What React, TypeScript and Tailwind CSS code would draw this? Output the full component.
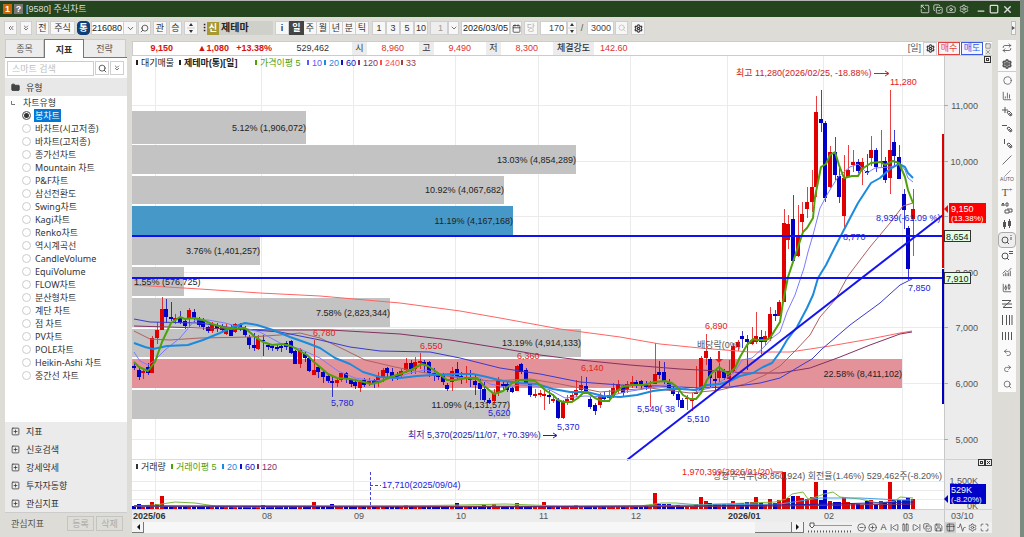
import type { ReactNode } from "react";
import { twMerge } from "tailwind-merge";
import {
  Activity,
  Calendar,
  Camera,
  ChartCandlestick,
  ChartColumn,
  ChartNoAxesCombined,
  ChevronDown,
  ChevronsDown,
  ChevronsLeft,
  Circle,
  CircleMinus,
  CirclePlus,
  CopyCheck,
  FolderMinus,
  Maximize,
  Minus,
  Pause,
  Redo2,
  Repeat,
  Save,
  Search,
  Settings,
  SkipBack,
  SkipForward,
  Slash,
  Square,
  SquareArrowOutUpLeft,
  SquarePlus,
  Table2,
  Undo2,
  X,
} from "lucide-react";

const chartTypes = [
  "봉차트",
  "바차트(시고저종)",
  "바차트(고저종)",
  "종가선차트",
  "Mountain 차트",
  "P&F차트",
  "삼선전환도",
  "Swing차트",
  "Kagi차트",
  "Renko차트",
  "역시계곡선",
  "CandleVolume",
  "EquiVolume",
  "FLOW차트",
  "분산형차트",
  "계단 차트",
  "점 차트",
  "PV차트",
  "POLE차트",
  "Heikin-Ashi 차트",
  "중간선 차트",
];

const sections = ["지표", "신호검색", "강세약세", "투자자동향", "관심지표"];

// [up, body top, body bottom, high, low]
type Candle = [number, number, number, number, number];

const candles: Candle[] = [
  [0, 366, 368, 363, 370], [0, 370, 377, 368, 380], [1, 371, 373, 370, 379], [0, 367, 373, 363, 375],
  [1, 338, 373, 336, 373], [1, 330, 338, 322, 344], [1, 309, 330, 297, 330], [0, 309, 317, 299, 323],
  [0, 317, 319, 302, 321], [1, 318, 320, 314, 324], [0, 318, 323, 311, 324], [0, 321, 326, 318, 329],
  [1, 310, 319, 308, 328], [0, 312, 319, 309, 322], [0, 319, 325, 317, 327], [0, 320, 327, 318, 330],
  [0, 327, 331, 326, 333], [1, 324, 331, 322, 333], [0, 325, 329, 323, 332], [0, 327, 330, 324, 333],
  [1, 328, 334, 323, 335], [0, 328, 336, 325, 336], [1, 324, 332, 323, 333], [0, 325, 328, 323, 331],
  [0, 328, 335, 326, 337], [0, 337, 345, 335, 349], [0, 345, 348, 333, 351], [1, 339, 349, 335, 350],
  [0, 340, 341, 335, 356], [0, 345, 347, 343, 350], [0, 346, 348, 344, 351], [0, 347, 349, 344, 351],
  [0, 346, 348, 343, 352], [0, 343, 347, 341, 350], [0, 341, 353, 340, 354], [0, 351, 364, 350, 364],
  [1, 350, 364, 348, 368], [0, 354, 358, 352, 362], [0, 358, 371, 357, 372], [1, 370, 375, 340, 375],
  [0, 367, 372, 366, 378], [0, 372, 377, 370, 383], [0, 376, 381, 374, 383], [0, 381, 383, 376, 397],
  [1, 380, 383, 378, 387], [1, 373, 380, 372, 382], [0, 373, 379, 372, 383], [0, 380, 384, 379, 387],
  [0, 382, 386, 379, 389], [1, 382, 388, 380, 392], [0, 380, 385, 378, 387], [1, 381, 383, 378, 386],
  [0, 380, 384, 379, 388], [1, 377, 383, 372, 387], [1, 370, 378, 368, 382], [0, 368, 373, 367, 377],
  [0, 372, 376, 368, 381], [0, 375, 377, 372, 380], [1, 371, 376, 369, 378], [1, 363, 370, 358, 373],
  [0, 363, 369, 360, 374], [1, 362, 369, 357, 374], [1, 361, 363, 353, 369], [0, 362, 365, 360, 373],
  [0, 362, 373, 361, 377], [0, 373, 376, 368, 381], [0, 375, 377, 373, 380], [0, 375, 382, 373, 385],
  [0, 385, 389, 383, 391], [1, 371, 382, 367, 391], [0, 369, 377, 362, 380], [0, 376, 378, 372, 384],
  [1, 377, 379, 366, 383], [0, 377, 380, 370, 387], [0, 381, 385, 375, 395], [0, 383, 389, 379, 400],
  [0, 389, 400, 382, 402], [0, 400, 403, 398, 404], [1, 393, 401, 389, 404], [1, 380, 393, 377, 396],
  [0, 384, 386, 381, 390], [0, 384, 390, 382, 392], [0, 388, 392, 387, 393], [1, 366, 391, 365, 391],
  [0, 364, 372, 363, 374], [0, 370, 383, 368, 384], [0, 384, 395, 383, 397], [1, 394, 396, 389, 398],
  [1, 393, 395, 390, 397], [1, 394, 396, 388, 410], [0, 395, 397, 390, 404], [1, 399, 401, 394, 403],
  [0, 400, 418, 398, 419], [1, 402, 418, 400, 419], [1, 399, 403, 395, 405], [1, 395, 400, 393, 401],
  [1, 390, 395, 380, 397], [1, 385, 390, 376, 393], [0, 386, 391, 377, 394], [0, 399, 407, 397, 409],
  [0, 405, 411, 403, 415], [1, 396, 405, 393, 408], [0, 396, 399, 392, 401], [1, 395, 398, 390, 402],
  [1, 388, 396, 383, 398], [1, 384, 390, 380, 394], [0, 387, 393, 385, 396], [1, 384, 390, 381, 393],
  [1, 382, 385, 376, 388], [0, 382, 385, 380, 388], [0, 381, 386, 380, 390], [0, 385, 387, 381, 390],
  [1, 386, 388, 381, 407], [1, 374, 384, 343, 384], [0, 372, 375, 361, 379], [0, 372, 382, 362, 384],
  [0, 383, 388, 379, 390], [0, 388, 394, 387, 396], [0, 394, 400, 392, 407], [0, 400, 408, 398, 408],
  [1, 398, 399, 395, 410], [1, 399, 401, 393, 411], [1, 392, 394, 366, 394], [1, 358, 390, 356, 391],
  [1, 351, 358, 334, 365], [0, 359, 378, 357, 388], [0, 379, 381, 372, 390], [1, 371, 378, 363, 382],
  [0, 372, 378, 369, 380], [1, 371, 379, 360, 386], [1, 346, 371, 343, 372], [1, 342, 347, 340, 351],
  [0, 336, 339, 331, 348], [0, 339, 342, 335, 370], [1, 340, 344, 327, 345], [1, 336, 342, 312, 344],
  [0, 337, 342, 330, 354], [1, 336, 342, 331, 346], [1, 314, 339, 307, 341], [0, 314, 316, 310, 321],
  [1, 302, 316, 300, 316], [1, 223, 302, 209, 302], [1, 224, 240, 215, 249], [0, 219, 261, 195, 262],
  [1, 237, 256, 205, 257], [1, 214, 222, 202, 237], [1, 202, 209, 187, 218], [1, 187, 202, 170, 212],
  [1, 112, 187, 96, 197], [0, 119, 123, 90, 132], [0, 123, 198, 121, 202], [1, 152, 187, 146, 188],
  [0, 152, 175, 137, 180], [0, 176, 197, 167, 203], [1, 178, 216, 155, 230], [1, 170, 177, 145, 177],
  [1, 162, 165, 150, 172], [0, 162, 171, 159, 173], [1, 162, 170, 158, 185], [0, 171, 173, 154, 175],
  [1, 150, 158, 136, 166], [0, 150, 167, 148, 172], [1, 161, 163, 130, 167], [0, 161, 180, 157, 183],
  [1, 150, 178, 90, 194], [0, 142, 156, 130, 166], [0, 157, 179, 145, 179], [0, 194, 210, 189, 229],
  [0, 228, 269, 226, 280], [1, 209, 219, 189, 256],
];

// bar heights for the days with notable volume, others stay near the floor
const earlyVolumes: Record<number, number> = {
  1: 5, 3: 3, 4: 7, 5: 5, 6: 13, 7: 3, 28: 4, 39: 7, 43: 5, 59: 4, 70: 6, 76: 4, 78: 5, 83: 6,
  89: 7, 96: 4, 104: 3, 113: 16, 114: 5, 115: 5, 116: 5, 118: 4,
};
const lateVolumes = [
  5, 12, 8, 6, 5, 5, 5, 5, 8, 6, 6, 7, 7, 12, 6, 4, 10, 6, 9, 37, 11, 13, 13, 11, 10, 12, 27, 9, 19,
  8, 7, 7, 12, 7, 5, 5, 4, 8, 9, 5, 8, 6, 27, 9, 9, 9, 11, 10,
];

const profile = [
  { top: 111, height: 33, right: 306, color: "#c3c3c3", label: "5.12% (1,906,072)" },
  { top: 145, height: 29, right: 576, color: "#c3c3c3", label: "13.03% (4,854,289)" },
  { top: 176, height: 28, right: 504, color: "#c3c3c3", label: "10.92% (4,067,682)" },
  { top: 206, height: 30, right: 513, color: "#4698c8", label: "11.19% (4,167,168)" },
  { top: 237, height: 28, right: 260, color: "#c3c3c3", label: "3.76% (1,401,257)" },
  { top: 267, height: 29, right: 184, color: "#c3c3c3", label: "" },
  { top: 298, height: 29, right: 390, color: "#c3c3c3", label: "7.58% (2,823,344)" },
  { top: 329, height: 28, right: 581, color: "#c3c3c3", label: "13.19% (4,914,133)" },
  { top: 359, height: 29, right: 902, color: "#e4929a", label: "22.58% (8,411,102)" },
  { top: 390, height: 29, right: 510, color: "#c3c3c3", label: "11.09% (4,131,577)" },
];

const averages = [
  { color: "#ff6464", width: 1, points: "134,285 200,289 260,293 320,296 400,303 460,311 500,318 560,329 620,337 660,344 700,348 750,352 790,352 830,346 870,339 900,333 912,331" },
  { color: "#85305f", width: 1, points: "134,326 200,328 270,330 330,330 400,334 450,340 500,348 540,355 580,360 630,365 680,369 720,371 745,373 780,373 810,368 840,357 870,345 900,334 912,332" },
  { color: "#b06060", width: 1, points: "134,331 150,339 170,340 200,338 250,337 280,335 300,333 320,338 345,350 365,360 395,367 420,372 460,378 490,381 530,379 560,384 600,392 650,388 690,393 720,390 745,384 765,375 780,366 795,351 810,335 820,317 835,300 848,276 870,247 890,223 903,206 913,203" },
  { color: "#3a3ad0", width: 1, points: "134,319 150,322 200,323 240,329 280,332 320,340 350,347 380,351 430,352 460,358 500,368 540,374 580,382 620,385 660,386 700,388 730,387 760,383 780,378 800,366 812,359 822,349 850,325 880,303 900,285 912,279" },
  { color: "#7b7bff", width: 1, points: "134,352 140,361 148,365 155,360 165,350 180,338 195,320 208,320 225,323 240,327 260,332 280,343 300,349 320,358 338,371 355,378 375,381 395,378 410,373 425,370 445,375 465,378 480,378 490,384 505,387 520,385 535,386 550,390 565,398 585,396 605,397 625,392 650,388 670,384 683,388 697,391 710,388 720,382 735,372 742,360 752,358 765,346 772,338 780,332 787,312 795,295 804,268 808,252 813,235 820,208 828,193 838,177 850,167 858,164 867,173 875,168 890,167 900,164 905,170 908,178 913,182" },
  { color: "#1c8add", width: 2, points: "134,343 145,347 153,349 167,346 188,345 203,340 220,333 233,327 245,323 257,325 273,330 290,337 307,343 320,348 335,358 350,364 363,372 380,377 400,378 417,376 433,375 453,374 473,374 487,377 503,381 520,383 537,384 553,389 570,392 587,392 603,396 620,397 637,395 653,391 670,389 680,389 695,390 707,385 720,384 730,381 740,376 753,373 763,367 772,363 780,352 787,340 797,327 807,308 813,295 818,278 826,265 835,247 848,222 858,203 871,183 880,178 890,169 899,164 905,167 908,173 913,178" },
  { color: "#50a00a", width: 2, points: "134,362 139,367 148,371 155,362 162,342 171,323 180,317 185,319 194,318 203,320 212,324 222,327 231,329 240,328 245,328 254,336 263,342 272,345 282,344 291,346 300,351 307,355 314,362 320,367 328,374 337,378 350,379 360,381 371,384 380,382 390,377 400,374 411,370 422,364 428,366 438,373 447,380 455,380 467,378 477,378 483,385 494,394 503,391 512,383 520,380 535,381 540,385 545,390 553,395 558,400 563,402 572,402 578,398 583,393 588,393 595,398 602,401 609,401 615,393 622,387 632,385 643,385 655,382 665,381 672,383 677,387 683,395 690,399 696,399 701,393 707,380 712,373 719,367 728,374 735,368 740,357 747,345 753,339 757,340 766,340 770,338 775,330 780,322 783,302 788,277 792,265 798,247 803,232 807,228 813,218 815,197 821,167 826,164 830,155 835,152 839,165 844,178 852,176 858,176 862,169 871,163 881,162 885,165 893,161 899,163 905,177 908,190 913,203" },
];

const volumeAverages = [
  { color: "#7cb83c", points: "134,506 155,505 175,502 195,503 215,506 400,506 460,505 505,504 560,506 640,506 662,503 676,503 700,505 715,504 750,503 775,502 786,499 792,494 803,492 808,499 816,497 824,494 833,492 840,497 860,499 878,503 895,501 900,497 913,498" },
  { color: "#3f9fe8", points: "134,506 250,507 400,506 600,506 700,505 780,504 800,501 820,498 860,498 900,500 913,500" },
  { color: "#2222b0", points: "134,506 400,507 700,506 780,505 830,504 913,502" },
  { color: "#85305f", points: "134,506 300,506 600,507 780,506 913,504" },
];

const BLUE = "#2222dd";
const RED = "#e82020";
const GRAY = "#555555";

const labels = [
  { x: 313, y: 336, color: RED, text: "6,780" },
  { x: 420, y: 349, color: RED, text: "6,550" },
  { x: 517, y: 359, color: RED, text: "6,360" },
  { x: 581, y: 371, color: RED, text: "6,140" },
  { x: 705, y: 329, color: RED, text: "6,890" },
  { x: 736, y: 76, color: "#d02020", text: "최고 11,280(2026/02/25, -18.88%)" },
  { x: 890, y: 85, color: RED, text: "11,280" },
  { x: 331, y: 406, color: BLUE, text: "5,780" },
  { x: 488, y: 416, color: BLUE, text: "5,620" },
  { x: 557, y: 430, color: BLUE, text: "5,370" },
  { x: 408, y: 438, color: "#2222aa", text: "최저 5,370(2025/11/07, +70.39%)" },
  { x: 637, y: 412, color: BLUE, text: "5,549( 38" },
  { x: 687, y: 422, color: BLUE, text: "5,510" },
  { x: 908, y: 291, color: BLUE, text: "7,850" },
  { x: 876, y: 221, color: BLUE, text: "8,939(-61.09 %)" },
  { x: 843, y: 240, color: BLUE, text: "8,770" },
  { x: 697, y: 348, color: GRAY, text: "배당락(0%)" },
  { x: 134, y: 285, color: "#222222", text: "1.55% (576,725)" },
  { x: 382, y: 488, color: BLUE, text: "17,710(2025/09/04)" },
  { x: 682, y: 475, color: RED, text: "1,970,399(2026/01/20)" },
];

const priceLegend = [
  { x: 136, color: "#222222", text: "대기매물", bold: false },
  { x: 179, color: "#222222", text: "제테마(통)[일]", bold: true },
  { x: 255, color: "#50a00a", text: "가격이평 5", bold: false },
  { x: 307, color: "#5a5aff", text: "10", bold: false },
  { x: 324, color: "#1c8add", text: "20", bold: false },
  { x: 341, color: "#1010c8", text: "60", bold: false },
  { x: 358, color: "#85305f", text: "120", bold: false },
  { x: 380, color: "#ff5050", text: "240", bold: false },
  { x: 401, color: "#a04040", text: "33", bold: false },
];

const volumeLegend = [
  { x: 136, color: "#333333", text: "거래량" },
  { x: 171, color: "#50a00a", text: "거래이평 5" },
  { x: 222, color: "#1c8add", text: "20" },
  { x: 240, color: "#1010c8", text: "60" },
  { x: 257, color: "#85305f", text: "120" },
];

const months = [
  { x: 155, at: 133, text: "2025/06", bold: true },
  { x: 261, at: 262, text: "08", bold: false },
  { x: 353, at: 354, text: "09", bold: false },
  { x: 455, at: 456, text: "10", bold: false },
  { x: 538, at: 539, text: "11", bold: false },
  { x: 630, at: 631, text: "12", bold: false },
  { x: 727, at: 728, text: "2026/01", bold: true },
  { x: 823, at: 824, text: "02", bold: false },
  { x: 902, at: 903, text: "03", bold: false },
];

const prices = [11000, 10000, 9000, 8000, 7000, 6000, 5000];
const priceY = (price: number) => Math.round(105 + ((11000 - price) / 1000) * 55.6);
const candleX = (i: number) => Math.round(134 + i * 4.609);
const volumeAt = (i: number) => (i >= 122 ? lateVolumes[i - 122] : (earlyVolumes[i] ?? 2 + (i % 3 === 0 ? 1 : 0)));

function StockChart() {
  return (
    <svg
      viewBox="132 56 860 466"
      className="block h-auto w-full bg-white text-[9px]"
      role="img"
      aria-label="제테마 일봉 차트"
    >
      <g shapeRendering="crispEdges">
        <rect x="132" y="56" width="860" height="466" fill="#ffffff" />
        {months.map((m) => (
          <rect key={m.x} x={m.x} y="56" width="1" height="453" fill="#ebebeb" />
        ))}
        {prices.map((p) => (
          <rect key={p} x="132" y={priceY(p)} width="812" height="1" fill="#ebebeb" />
        ))}
        {[481, 490, 499].map((y) => (
          <rect key={y} x="132" y={y} width="812" height="1" fill="#ebebeb" />
        ))}
        {profile.map((bar) => (
          <rect key={bar.top} x="132" y={bar.top} width={bar.right - 132} height={bar.height} fill={bar.color} />
        ))}
      </g>

      {profile.map((bar) => (
        <text key={bar.top} x={bar.right} y={bar.top + Math.round(bar.height / 2) + 3} textAnchor="end" fill="#222222">
          {bar.label}
        </text>
      ))}

      <g shapeRendering="crispEdges">
        {candles.map(([up, top, bottom, high, low], i) => {
          const color = up ? "#e00000" : "#0000c8";
          const x = candleX(i);
          return (
            <g key={i} fill={color}>
              <rect x={x} y={high} width="1" height={low - high} opacity="0.75" />
              <rect x={x - 2} y={top} width="4" height={bottom - top} />
              <rect x={x - 2} y={509 - volumeAt(i)} width="4" height={volumeAt(i)} />
            </g>
          );
        })}
      </g>

      <g fill="none" strokeLinejoin="round">
        {averages.map((line) => (
          <polyline key={line.color} points={line.points} stroke={line.color} strokeWidth={line.width} />
        ))}
        {volumeAverages.map((line) => (
          <polyline key={line.color} points={line.points} stroke={line.color} />
        ))}
        <path d="M132 236H943M132 278H943" stroke="#1010f0" strokeWidth="2" />
        <path d="M627 460L943 215" stroke="#1414f0" strokeWidth="2" />
        <path d="M370.5 472V508M370 485.5H381" stroke="#4444dd" strokeDasharray="3 2" />
        <path d="M543 435.5H556M553 433L557 435.5L553 438" stroke="#2222aa" />
        <path d="M874 73.5H888M885 71L889 73.5L885 76" stroke="#d02020" />
        <path d="M773 472H783" stroke={RED} />
      </g>
      <path d="M718 351H720V359H723L719 363L715 359H718Z" fill={RED} />

      {labels.map((l) => (
        <text key={l.text} x={l.x} y={l.y} fill={l.color}>
          {l.text}
        </text>
      ))}
      <text x="942" y="479" textAnchor="end" fill={GRAY}>
        상장주식수(36,360,924) 회전율(1.46%) 529,462주(-8.20%)
      </text>

      {priceLegend.map((l) => (
        <g key={l.x} fill={l.color}>
          <rect x={l.x} y="60" width="2" height="5" />
          <text x={l.x + 5} y="66" fontWeight={l.bold ? 700 : 400}>
            {l.text}
          </text>
        </g>
      ))}
      {volumeLegend.map((l) => (
        <g key={l.x} fill={l.color}>
          <rect x={l.x} y="464" width="2" height="5" />
          <text x={l.x + 5} y="470">
            {l.text}
          </text>
        </g>
      ))}

      <g shapeRendering="crispEdges">
        <rect x="132" y="459" width="812" height="1" fill="#dcdcdc" />
        <rect x="944" y="56" width="48" height="466" fill="#ececec" />
        <rect x="132" y="509" width="860" height="13" fill="#ececec" />
        <rect x="944" y="56" width="1" height="466" fill="#c8c8c8" />
        <rect x="944" y="459" width="48" height="1" fill="#d0d0d0" />
        <rect x="132" y="509" width="860" height="1" fill="#d0d0d0" />
        <rect x="942" y="134" width="2" height="134" fill="#dd0000" />
        <rect x="942" y="269" width="2" height="135" fill="#0000c0" />
      </g>

      {prices.map((p) => (
        <g key={p}>
          <path d={`M944 ${priceY(p) + 0.5}h4`} stroke="#aaaaaa" />
          {p !== 9000 && (
            <text x="978" y={priceY(p) + 4} textAnchor="end" fill={GRAY}>
              {p.toLocaleString("en-US")}
            </text>
          )}
        </g>
      ))}
      {months.map((m) => (
        <text key={m.at} x={m.at} y="519" fill={m.bold ? "#333333" : GRAY} fontWeight={m.bold ? 700 : 400}>
          {m.text}
        </text>
      ))}
      <text x="951" y="519" fill={GRAY}>03/10</text>
      <text x="978" y="484" textAnchor="end" fill={GRAY}>1,500K</text>
      <text x="978" y="509" textAnchor="end" fill={GRAY}>0K</text>

      <rect x="949" y="203" width="37" height="20" fill="#ff0000" />
      <path d="M944 209L948 205V213Z" fill="#ff0000" />
      <g fill="#ffffff">
        <text x="951" y="212">9,150</text>
        <text x="951" y="221" className="text-[8px]">(13.38%)</text>
      </g>
      <g fill="#e0ffe0" stroke="#333333">
        <rect x="944.5" y="230.5" width="26" height="11" />
        <rect x="944.5" y="272.5" width="26" height="11" />
      </g>
      <g fill="#222222">
        <text x="946" y="240">8,654</text>
        <text x="946" y="282">7,910</text>
      </g>
      <rect x="950" y="484" width="36" height="20" fill="#0000c8" />
      <path d="M944 499L948 495V503Z" fill="#0000c8" />
      <g fill="#ffffff">
        <text x="951" y="493">529K</text>
        <text x="951" y="502" className="text-[8px]">(-8.20%)</text>
      </g>
      <g fill="#eeeeee" stroke="#333333">
        <rect x="984.5" y="56.5" width="6" height="6" />
        <rect x="986.5" y="58.5" width="2" height="2" />
        <rect x="978.5" y="459.5" width="6" height="6" />
        <rect x="980.5" y="461.5" width="2" height="2" />
        <rect x="985.5" y="459.5" width="6" height="6" />
        <path d="M987 461l3 3M990 461l-3 3" />
      </g>
    </svg>
  );
}

function ToolButton({ className, label, children }: { className?: string; label?: string; children: ReactNode }) {
  return (
    <button
      type="button"
      aria-label={label}
      className={twMerge(
        "flex h-[14px] shrink-0 items-center justify-center border border-[#cfcfcf] bg-[#f7f7f7] text-[#333]",
        className,
      )}
    >
      {children}
    </button>
  );
}

function Spinner({ className }: { className?: string }) {
  return (
    <ToolButton label="증감" className={className}>
      <svg viewBox="0 0 8 12" className="h-3 w-2" fill="#333333">
        <path d="M4 1L6 4H2ZM4 11L6 8H2Z" />
        <path d="M0 5.5H8V6.5H0Z" fill="#cccccc" />
      </svg>
    </ToolButton>
  );
}

const periods = ["주", "월", "년", "분", "틱"];
const intervals = ["1", "3", "5", "10"];

function Toolbar() {
  return (
    <div className="flex h-[22px] items-center overflow-hidden pl-1 text-[9px] leading-none">
      <ToolButton label="이전" className="w-[13px]"><ChevronsLeft size={8} /></ToolButton>
      <ToolButton label="펼치기" className="ml-[3px] w-[12px]"><ChevronsDown size={8} /></ToolButton>
      <ToolButton className="ml-1 w-[13px]">전</ToolButton>
      <ToolButton className="ml-px w-[25px]">주식</ToolButton>
      <ToolButton className="ml-[2px] w-[13px] rounded-sm border-[#0d3f78] bg-[#0d3f78] font-bold text-white">통</ToolButton>
      <input aria-label="종목코드" defaultValue="216080" className="ml-px h-[14px] w-[33px] shrink-0 border border-[#cfcfcf] bg-white text-[#222]" />
      <ToolButton label="종목 목록" className="w-[13px] border-l-0"><ChevronDown size={9} /></ToolButton>
      <ToolButton label="종목 검색" className="ml-px w-[13px]"><Search size={9} className="-scale-x-100" /></ToolButton>
      <ToolButton className="ml-[2px] w-[14px]">관</ToolButton>
      <ToolButton className="ml-[2px] w-[13px]">승</ToolButton>
      <Spinner className="ml-[2px] w-[14px]" />
      <span className="ml-[2px] w-1 text-center font-bold">⋮</span>
      <span className="ml-[3px] flex h-[13px] w-[12px] shrink-0 items-center justify-center bg-[#a89a32] font-bold text-white">신</span>
      <span className="flex h-[14px] w-[54px] shrink-0 items-center bg-[#d0d0ca] pl-[2px] text-[10px] font-bold text-[#222]">제테마</span>
      <ToolButton label="정보" className="ml-[2px] w-[14px] font-bold">i</ToolButton>
      <ToolButton className="w-[15px] border-[#444] bg-[#444] font-bold text-white">일</ToolButton>
      {periods.map((p) => (
        <ToolButton key={p} className="w-[13px] border-l-0">{p}</ToolButton>
      ))}
      <span className="w-[3px]" />
      {intervals.map((n) => (
        <ToolButton key={n} className="w-[14px]">{n}</ToolButton>
      ))}
      <input aria-label="주기" defaultValue="1" className="ml-[2px] h-[14px] w-[18px] shrink-0 border border-[#cfcfcf] bg-[#eee] pr-1 text-right text-[#999]" />
      <ToolButton label="주기 목록" className="w-[11px]"><ChevronDown size={8} /></ToolButton>
      <input aria-label="날짜" defaultValue="2026/03/05" className="ml-[2px] h-[14px] w-[49px] shrink-0 border border-[#cfcfcf] bg-white px-px text-[#222]" />
      <ToolButton label="달력" className="w-[12px]"><Calendar size={9} /></ToolButton>
      <ToolButton className="ml-[2px] w-[14px] text-[#b5b5b5]">당</ToolButton>
      <input aria-label="표시 개수" defaultValue="170" className="ml-[2px] h-[14px] w-[27px] shrink-0 border border-[#cfcfcf] bg-white pr-[2px] text-right text-[#444]" />
      <Spinner className="w-[10px]" />
      <span className="w-[10px] text-center text-[#555]">/</span>
      <input aria-label="전체 개수" defaultValue="3000" className="h-[14px] w-[27px] shrink-0 border border-[#cfcfcf] bg-white pr-[2px] text-right text-[#444]" />
      <ToolButton label="확대" className="ml-px w-[13px] text-[#b5b5b5]"><Search size={8} /></ToolButton>
      <ToolButton label="설정" className="ml-[3px] w-[14px]"><Settings size={9} strokeWidth={3} /></ToolButton>
      <button type="button" aria-label="더보기" className="mr-1 ml-auto h-[14px] w-[5px] border border-[#bbb] bg-[#f5f5f5]">
        <svg viewBox="0 0 3 4" className="h-1 w-[3px]" fill="#555555">
          <path d="M0 0L3 2L0 4Z" />
        </svg>
      </button>
    </div>
  );
}

function Sidebar() {
  return (
    <aside className="flex w-[122px] shrink-0 flex-col bg-white text-[9px] leading-none text-[#333] [font-family:'Noto_Sans','Noto_Sans_CJK_KR',sans-serif]">
      <div className="flex h-[19px] border-b border-[#777] bg-[#dddcd6]">
        <button type="button" className="w-[39px] border border-b-0 border-[#ccc] bg-[#ececec] text-[#555]">종목</button>
        <button type="button" className="-mb-px w-[40px] border border-b-0 border-[#777] bg-white font-bold">지표</button>
        <button type="button" className="w-[42px] border border-l-0 border-b-0 border-[#ccc] bg-[#ececec] text-[#555]">전략</button>
      </div>
      <div className="flex h-[20px] items-center gap-px px-[2px]">
        <input aria-label="스마트 검색" placeholder="스마트 검색" className="h-[15px] w-[87px] min-w-0 border border-[#ccc] px-1 placeholder:text-[#c0c0c0]" />
        <ToolButton label="검색" className="w-[14px] bg-white"><Search size={9} /></ToolButton>
        <ToolButton label="펼치기" className="w-[14px] bg-white"><ChevronsDown size={8} /></ToolButton>
      </div>
      <div className="flex h-[18px] items-center gap-[6px] bg-[#e8e8e8] pl-[6px]">
        <FolderMinus size={9} fill="#444444" />
        <span>유형</span>
      </div>
      <fieldset className="grow">
        <legend className="sr-only">차트유형</legend>
        <div className="flex h-[13px] items-center gap-[8px] pl-[6px]">
          <svg viewBox="0 0 4 4" className="size-1" fill="none" stroke="#777777">
            <path d="M0.5 0V3.5H4" />
          </svg>
          <span>차트유형</span>
        </div>
        {chartTypes.map((name, i) => (
          <label key={name} className="flex h-[13px] items-center gap-[3px] pl-[17px]">
            <input
              type="radio"
              name="chartType"
              defaultChecked={i === 0}
              className="size-[9px] shrink-0 appearance-none rounded-full border border-[#ccc] bg-white checked:border-[#777] checked:bg-[#333] checked:shadow-[inset_0_0_0_1px_white]"
            />
            <span className={i === 0 ? "bg-[#0078d7] px-px py-[2px] text-white" : "px-px"}>{name}</span>
          </label>
        ))}
      </fieldset>
      <div className="bg-[#ebebeb]">
        {sections.map((name) => (
          <button key={name} type="button" className="flex h-[18px] w-full items-center gap-[6px] pl-[6px]">
            <SquarePlus size={9} />
            <span>{name}</span>
          </button>
        ))}
      </div>
      <div className="flex h-[21px] items-center border-t border-[#ccc] bg-[#dddcd6] pl-[6px]">
        <span className="grow text-[#555]">관심지표</span>
        <button type="button" className="h-[15px] w-[27px] border border-[#c4c4c0] text-[#aaa]">등록</button>
        <button type="button" className="mr-1 ml-[2px] h-[15px] w-[27px] border border-[#c4c4c0] text-[#aaa]">삭제</button>
      </div>
    </aside>
  );
}

function Quote({ label, value }: { label: string; value: string }) {
  return (
    <div className="flex items-center">
      <span className="flex h-[13px] w-[15px] items-center justify-center bg-[#ececec] text-[#333]">{label}</span>
      <span className="w-[52px] pr-[15px] text-right text-[#e03030]">{value}</span>
    </div>
  );
}

function QuoteBar() {
  return (
    <div className="flex h-[15px] items-center overflow-hidden border border-r-0 border-[#ccc] bg-white text-[9px] leading-none whitespace-nowrap">
      <span className="w-[40px] text-right font-bold text-[#d81010]">9,150</span>
      <span className="w-[56px] text-right font-bold text-[#d81010]">▲1,080</span>
      <span className="w-[43px] text-right font-bold text-[#d81010]">+13.38%</span>
      <span className="mr-[23px] w-[57px] text-right text-[#333]">529,462</span>
      <Quote label="시" value="8,960" />
      <Quote label="고" value="9,490" />
      <Quote label="저" value="8,300" />
      <span className="flex h-[13px] w-[41px] items-center justify-center bg-[#ececec] font-medium text-[#333]">체결강도</span>
      <span className="ml-[6px] text-[#e03030]">142.60</span>
      <span className="mr-[2px] ml-auto text-[#555]">[일]</span>
      <ToolButton label="차트 설정" className="w-[14px]"><Settings size={9} strokeWidth={3} /></ToolButton>
      <button type="button" className="ml-px h-[13px] w-[22px] border border-[#e04040] bg-[#fff4f4] text-[#e04040]">매수</button>
      <button type="button" className="ml-px h-[13px] w-[22px] border border-[#3a5ae0] bg-[#f2f4ff] text-[#3a5ae0]">매도</button>
      <span className="ml-[2px] flex w-[7px] flex-col bg-[#e4e4e4] text-[#555]">
        <Square size={6} />
        <X size={6} />
      </span>
    </div>
  );
}

const footerIcons = [
  { name: "축소", icon: CircleMinus },
  { name: "확대", icon: CirclePlus },
  { name: "A", icon: null },
  { name: "처음", icon: SkipBack },
  { name: "일시정지", icon: Pause },
  { name: "끝", icon: SkipForward },
  { name: "불러오기", icon: CopyCheck },
  { name: "저장", icon: Save },
  { name: "표", icon: Table2 },
  { name: "분석", icon: Activity },
  { name: "환경설정", icon: Settings },
  { name: "전체화면", icon: Maximize },
];

function ScrollRow() {
  return (
    <div className="flex h-[11px] items-center bg-[#f0f0f0] text-[#444]">
      <button type="button" aria-label="왼쪽" className="flex h-full w-[12px] items-center justify-center border-r border-b border-[#777] bg-[#f4f4f4]">
        <svg viewBox="0 0 4 6" className="h-[6px] w-1" fill="#111111">
          <path d="M4 0V6L1 3Z" />
        </svg>
      </button>
      <div className="flex h-full grow justify-end bg-[#f7f7f7]">
        <div className="h-full w-[37px] border-r border-b border-[#777] bg-[#efefef]" />
      </div>
      <button type="button" aria-label="오른쪽" className="flex h-full w-[12px] items-center justify-center border-r border-b border-[#777] bg-[#f4f4f4]">
        <svg viewBox="0 0 4 6" className="h-[6px] w-1" fill="#111111">
          <path d="M0 0V6L3 3Z" />
        </svg>
      </button>
      <svg viewBox="0 0 52 11" className="h-[11px] w-[52px]" fill="none" stroke="#555555">
        <path d="M5 3.5H48" stroke="#999999" />
        <path d="M6 1H10V4L8 6L6 4Z" fill="#ffffff" />
        <path d="M4 9.5H48" strokeWidth="2" strokeDasharray="1 2" />
      </svg>
      {footerIcons.map(({ name, icon: Icon }) => (
        <button
          key={name}
          type="button"
          aria-label={name}
          className={twMerge(
            "flex h-full w-[11px] items-center justify-center text-[9px] leading-none",
            name === "표" && "w-[12px] bg-[#d0d0d0]",
            name === "전체화면" && "w-[12px]",
          )}
        >
          {Icon ? <Icon size={9} /> : "A"}
        </button>
      ))}
      <span className="w-[2px]" />
    </div>
  );
}

function Glyph({ children }: { children: ReactNode }) {
  return (
    <svg viewBox="0 0 12 12" className="size-3" fill="none" stroke="currentColor">
      {children}
    </svg>
  );
}

const pen = <path d="M6 6L8 5L11 8L10 10L8 9ZM8 7L10 9" />;

const drawTools = [
  { name: "전환", icon: <Repeat size={10} /> },
  { name: "설정", icon: <Settings size={10} strokeWidth={4} /> },
  { name: "원", icon: <Circle size={9} /> },
  { name: "지표 차트", icon: <ChartColumn size={10} /> },
  { name: "십자선", icon: <Glyph><path d="M4 1V7M1 4H7" />{pen}</Glyph> },
  { name: "수평선", icon: <Glyph><path d="M1 3.5H6" />{pen}</Glyph> },
  { name: "수직선", icon: <Glyph><path d="M3.5 1V6" />{pen}</Glyph> },
  { name: "추세선", icon: <Slash size={10} /> },
  {
    name: "자동추세선",
    icon: (
      <span className="flex flex-col items-center text-[5px] leading-none">
        <Slash size={7} />
        AUTO
      </span>
    ),
  },
  { name: "문자", icon: <span className="text-[11px] leading-none [font-family:'Liberation_Serif',serif]">T<sup className="text-[7px]">+</sup></span> },
  { name: "도형", icon: <Glyph><path d="M1 4V2L2 1L3 2V4M1 3H3M5 1H7V4H5ZM6 7H11V10H8M4 8H8V11H4Z" /></Glyph> },
  { name: "캔들", icon: <Glyph><path d="M3.5 2V11M8.5 1V10" /><path d="M3.5 4V9M8.5 3V8" strokeWidth="3" /></Glyph> },
  { name: "정보 검색", icon: <Glyph><circle cx="4" cy="6" r="3" /><path d="M6 8L8 10M10 1V2M10 3V6" /></Glyph> },
  { name: "목록 검색", icon: <Glyph><circle cx="4" cy="6" r="3" /><path d="M6 8L8 10M8 1.5H12M8 3.5H12" /></Glyph> },
  { name: "차트 검색", icon: <ChartNoAxesCombined size={10} /> },
  { name: "차트 이동", icon: <ChartCandlestick size={10} /> },
  { name: "되돌림", icon: <Glyph><path d="M1 2.5H10L2 9.5H11M1 6H11" /></Glyph> },
  { name: "시간선", icon: <Glyph><path d="M1.5 1V11M5.5 1V11M8.5 1V11M11 1V11" /></Glyph> },
  { name: "간격선", icon: <Glyph><path d="M1.5 2V10M4.5 2V10M7.5 2V10M10.5 2V10" /></Glyph> },
  { name: "실행취소", icon: <Undo2 size={9} /> },
  { name: "다시실행", icon: <Redo2 size={9} /> },
  { name: "돋보기", icon: <Search size={9} /> },
];

function DrawToolbar() {
  return (
    <nav aria-label="그리기 도구" className="mt-px flex w-[18px] shrink-0 flex-col self-start bg-[#fafafa] text-[#555]">
      {drawTools.map((tool, i) => (
        <button
          key={tool.name}
          type="button"
          aria-label={tool.name}
          className={twMerge(
            "flex h-4 items-center justify-center",
            i === 1 && "border-b border-[#ccc]",
            i === 12 && "rounded-sm border border-[#aaa] bg-[#eee]",
          )}
        >
          {tool.icon}
        </button>
      ))}
    </nav>
  );
}

function TitleBar() {
  return (
    <header className="flex h-[17px] items-center border-t border-[#b5b5b5] bg-[#24451d] pr-[7px] pl-[3px] text-[9px] leading-none text-[#ddd]">
      <span className="flex h-[10px] w-[9px] items-center justify-center bg-[#c8660a] font-bold text-white">1</span>
      <span className="ml-[2px] flex h-[10px] w-[9px] items-center justify-center bg-[#777] font-bold text-white">?</span>
      <h1 className="ml-[3px] grow text-[9px]">[9580] 주식차트</h1>
      <div className="flex items-center gap-[3px]">
        <button type="button" aria-label="분리"><SquareArrowOutUpLeft size={10} /></button>
        <button type="button" aria-label="복사"><CopyCheck size={10} /></button>
        <button type="button" aria-label="캡처"><Camera size={10} /></button>
        <button type="button" aria-label="설정" className="mr-1"><Settings size={10} /></button>
        <button type="button" aria-label="최소화"><Minus size={10} strokeWidth={3} className="mt-1" /></button>
        <button type="button" aria-label="최대화"><Square size={10} strokeWidth={3} /></button>
        <button type="button" aria-label="닫기"><X size={11} strokeWidth={3} /></button>
      </div>
    </header>
  );
}

export default function App() {
  return (
    <div className="min-h-screen border-r-4 border-[#7d8a80] bg-[#dddcd6] pb-1 [font-family:'Liberation_Sans','Noto_Sans_CJK_KR',sans-serif]">
      <TitleBar />
      <Toolbar />
      <main className="flex pr-1 pl-[5px]">
        <Sidebar />
        <section className="mt-[2px] ml-[5px] min-w-0 grow">
          <QuoteBar />
          <StockChart />
          <ScrollRow />
        </section>
        <div className="w-[6px] shrink-0" />
        <DrawToolbar />
      </main>
    </div>
  );
}
